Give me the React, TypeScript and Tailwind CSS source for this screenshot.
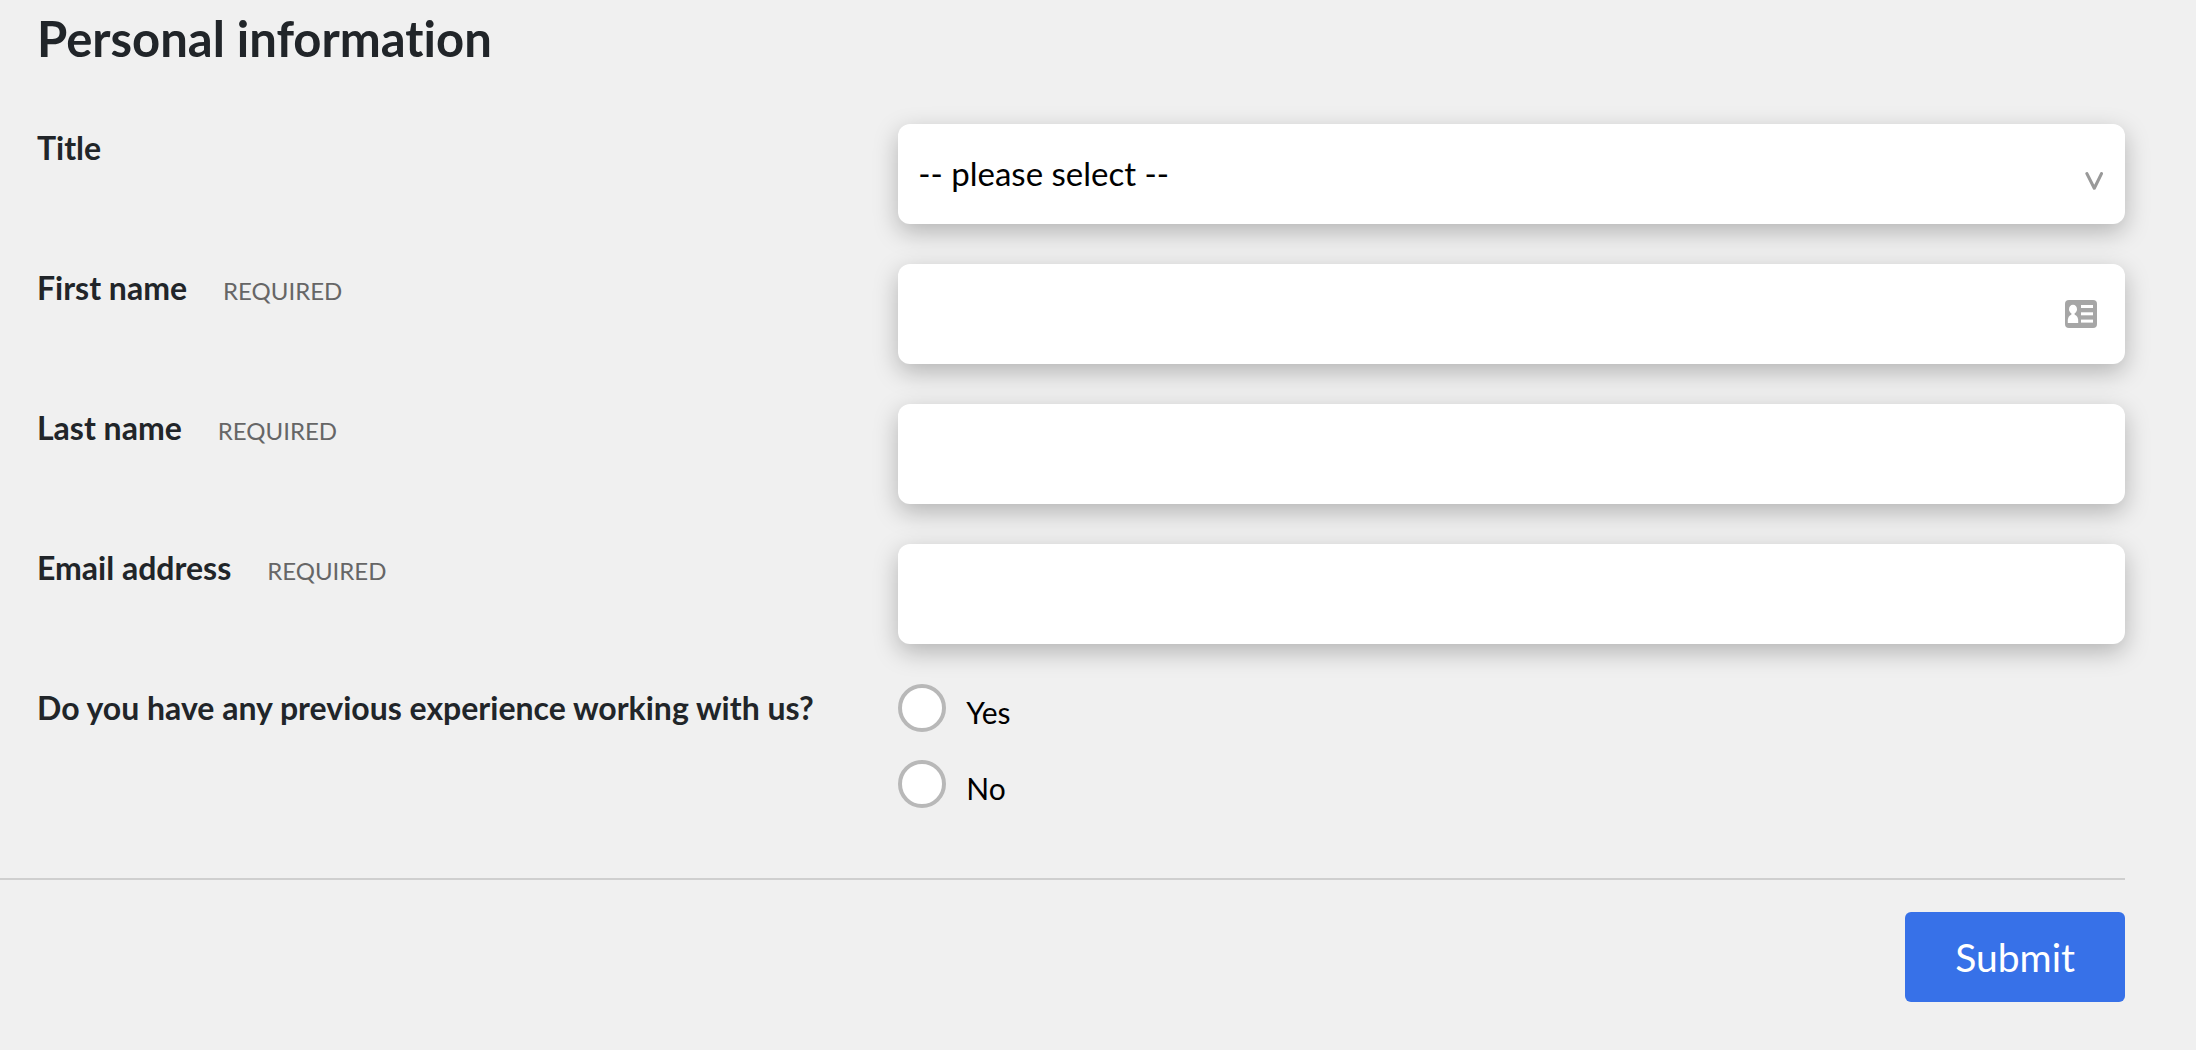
import { useState } from "react";
import type { ReactNode } from "react";
import clsx from "clsx";

const TITLES = ["Mr", "Mrs", "Miss", "Ms", "Dr"];

const CONTROL =
  "block h-[100px] w-full appearance-none rounded-xl bg-white px-5 text-[33px] text-black shadow-[0_8px_24px_rgba(0,0,0,0.25)] outline-none focus-visible:ring-4 focus-visible:ring-[#3771e8]";

const LABEL = "text-[32px] leading-12 font-bold text-[#212529]";

function Row({
  id,
  label,
  required,
  children,
}: {
  id: string;
  label: string;
  required?: boolean;
  children: ReactNode;
}) {
  return (
    <div className="grid grid-cols-[33fr_47fr]">
      <label htmlFor={id} className={clsx(LABEL, "flex items-baseline gap-9 self-start")}>
        {label}
        {required && <span className="text-2xl font-normal text-[#666]">REQUIRED</span>}
      </label>
      <div className="relative">{children}</div>
    </div>
  );
}

function ContactCardIcon() {
  return (
    <svg
      viewBox="0 0 32 28"
      aria-hidden="true"
      className="pointer-events-none absolute top-9 right-7 h-7 w-8"
    >
      <rect width="32" height="28" rx="4" fill="#a6a6a6" />
      <g fill="#fff">
        <ellipse cx="8" cy="9.2" rx="4" ry="4.4" />
        <rect x="6.4" y="12" width="3.2" height="4" />
        <path d="M2.8 23v-2.5c0-3.4 2-6 5.2-6s5.2 2.6 5.2 6V23z" />
        <rect x="16" y="5" width="12" height="3" />
        <rect x="16" y="12.3" width="12" height="3" />
        <rect x="16" y="19.6" width="12" height="3" />
      </g>
    </svg>
  );
}

function Radio({
  id,
  label,
  checked,
  onChange,
}: {
  id: string;
  label: string;
  checked: boolean;
  onChange: () => void;
}) {
  return (
    <div className="flex gap-5">
      <input
        id={id}
        type="radio"
        name="experience"
        checked={checked}
        onChange={onChange}
        className="size-12 appearance-none rounded-full border-4 border-[#b8b8b8] bg-white checked:border-[14px] checked:border-[#3771e8]"
      />
      <label htmlFor={id} className="pt-2 text-[30px] leading-10 text-black">
        {label}
      </label>
    </div>
  );
}

export default function App() {
  const [title, setTitle] = useState("");
  const [experience, setExperience] = useState("");

  return (
    <main className="min-h-screen bg-[#f0f0f0] pr-[71px] font-['Lato',sans-serif] [font-variant-ligatures:none]">
      <form onSubmit={(e) => e.preventDefault()}>
        <div className="pb-[70px] pl-[37px]">
          <h2 className="pt-2 pb-14 text-[49px] leading-15 font-bold text-[#212529]">
            Personal information
          </h2>

          <div className="flex flex-col gap-10">
            <Row id="title" label="Title">
              <select
                id="title"
                value={title}
                onChange={(e) => setTitle(e.target.value)}
                className={CONTROL}
              >
                <option value="">-- please select --</option>
                {TITLES.map((t) => (
                  <option key={t}>{t}</option>
                ))}
              </select>
              <svg
                viewBox="0 0 18 18"
                aria-hidden="true"
                className="pointer-events-none absolute right-[22px] bottom-[34px] size-[18px]"
              >
                <path
                  d="M1.9 1.6 9.3 16.2 16.5 1.6"
                  fill="none"
                  stroke="#999"
                  strokeWidth="3.1"
                  strokeLinecap="round"
                  strokeLinejoin="round"
                />
              </svg>
            </Row>

            <Row id="first-name" label="First name" required>
              <input id="first-name" type="text" required className={clsx(CONTROL, "pr-20")} />
              <ContactCardIcon />
            </Row>

            <Row id="last-name" label="Last name" required>
              <input id="last-name" type="text" required className={CONTROL} />
            </Row>

            <Row id="email" label="Email address" required>
              <input id="email" type="email" required className={CONTROL} />
            </Row>

            <div
              role="radiogroup"
              aria-labelledby="experience-label"
              className="grid grid-cols-[33fr_47fr]"
            >
              <span id="experience-label" className={LABEL}>
                Do you have any previous experience working with us?
              </span>
              <div className="flex flex-col gap-7">
                <Radio
                  id="experience-yes"
                  label="Yes"
                  checked={experience === "yes"}
                  onChange={() => setExperience("yes")}
                />
                <Radio
                  id="experience-no"
                  label="No"
                  checked={experience === "no"}
                  onChange={() => setExperience("no")}
                />
              </div>
            </div>
          </div>
        </div>

        <div className="flex justify-end border-t-2 border-[#cfcfcf] pt-8">
          <button
            type="submit"
            className="rounded-md bg-[#3771e8] px-[50px] py-[15px] text-[39px] leading-15 text-white"
          >
            Submit
          </button>
        </div>
      </form>
    </main>
  );
}
